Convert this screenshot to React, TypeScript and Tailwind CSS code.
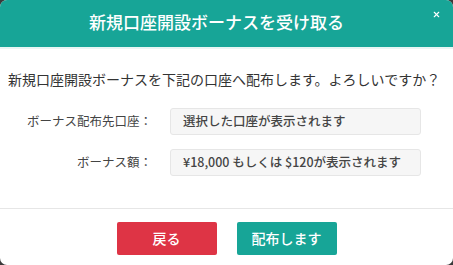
import { X } from "lucide-react";

const jp = "font-['Noto_Sans_CJK_JP','Noto_Sans',sans-serif]";

function Field({ label, value }: { label: string; value: string }) {
  return (
    <div className="flex items-center">
      <div className="w-[144px] shrink-0 text-right text-[12.5px] text-[#444]">{label}</div>
      <div className="ml-[18px] flex h-[27px] w-[251px] items-center rounded-[3px] border border-[#e6e6e6] bg-[#f6f6f6] px-[12px] text-[12.5px] font-medium text-[#444]">
        {value}
      </div>
    </div>
  );
}

export default function App() {
  return (
    <div className={`h-[265px] w-[453px] bg-[#3a3a3a] ${jp}`}>
      <div className="flex h-full w-full flex-col overflow-hidden rounded-[7px] bg-white">
        {/* ヘッダー */}
        <div className="relative flex h-[49px] shrink-0 items-center justify-center border-b-2 border-[#e8f6f4] bg-[#17a597] pb-[3px] pr-[20px] text-[17px] font-medium text-white">
          新規口座開設ボーナスを受け取る
          <button type="button" className="absolute right-[12px] top-[10px] text-white">
            <X size={9} strokeWidth={3} />
          </button>
        </div>

        {/* 本文 */}
        <div className="flex-1 px-[8px] pt-[20px]">
          <p className="text-[14px] leading-[20px] text-[#333]">
            新規口座開設ボーナスを下記の口座へ配布します。よろしいですか？
          </p>
          <div className="mt-[19px] flex flex-col gap-[14px]">
            <Field label="ボーナス配布先口座：" value="選択した口座が表示されます" />
            <Field label="ボーナス額：" value="¥18,000 もしくは $120が表示されます" />
          </div>
        </div>

        {/* フッター */}
        <div className="flex h-[57px] shrink-0 justify-center gap-[20px] border-t border-[#e6e6e6] pt-[13px]">
          <button
            type="button"
            className="h-[33px] w-[100px] rounded-[2px] bg-[#de3445] text-[14px] font-medium text-white"
          >
            戻る
          </button>
          <button
            type="button"
            className="h-[33px] w-[100px] rounded-[2px] bg-[#17a597] text-[14px] font-medium text-white"
          >
            配布します
          </button>
        </div>
      </div>
    </div>
  );
}
